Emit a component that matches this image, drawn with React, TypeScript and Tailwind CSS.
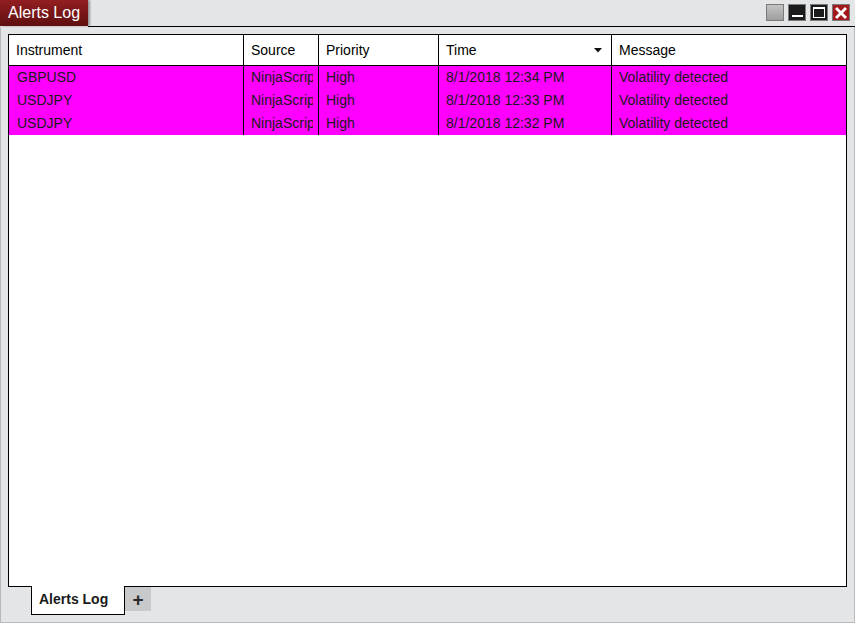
import type { ReactNode } from 'react';

const font = { fontFamily: '"Liberation Sans", Arial, sans-serif' };

const columns = ['Instrument', 'Source', 'Priority', 'Time', 'Message'];

const alerts = [
  { instrument: 'GBPUSD', source: 'NinjaScript', priority: 'High', time: '8/1/2018 12:34 PM', message: 'Volatility detected' },
  { instrument: 'USDJPY', source: 'NinjaScript', priority: 'High', time: '8/1/2018 12:33 PM', message: 'Volatility detected' },
  { instrument: 'USDJPY', source: 'NinjaScript', priority: 'High', time: '8/1/2018 12:32 PM', message: 'Volatility detected' },
];

function WinButton({ className, children }: { className: string; children?: ReactNode }) {
  return (
    <div className={`flex h-[17px] w-[18px] items-center justify-center border border-[#7a7a7a] ${className}`}>
      {children}
    </div>
  );
}

function TitleBar() {
  return (
    <div className="flex h-[27px] items-start">
      <div className="relative z-10 flex h-[26px] w-[88px] items-center bg-gradient-to-b from-[#931e21] to-[#5f0f10] pl-[8px] text-[16px] text-white shadow-[2px_0_2px_rgba(0,0,0,0.35)]">
        Alerts Log
      </div>
      <div className="flex h-[27px] flex-1 items-start justify-end gap-[4px] border-b border-black pr-[5px] pt-[4px]">
        <WinButton className="bg-gradient-to-b from-[#c4c4c4] to-[#9e9e9e]" />
        <WinButton className="items-end bg-[#1b1b1b] pb-[3px]">
          <div className="h-[2px] w-[11px] bg-white" />
        </WinButton>
        <WinButton className="bg-[#1b1b1b]">
          <div className="h-[11px] w-[12px] border border-t-[2px] border-white" />
        </WinButton>
        <WinButton className="bg-[#a3191b]">
          <svg width="12" height="12" viewBox="0 0 12 12">
            <path d="M2 2 L10 10 M10 2 L2 10" stroke="white" strokeWidth="2.8" strokeLinecap="square" />
          </svg>
        </WinButton>
      </div>
    </div>
  );
}

function AlertsGrid() {
  const grid = 'grid grid-cols-[235px_75px_120px_173px_1fr]';
  return (
    <div className="mx-[7px] mt-[7px] flex-1 border border-black bg-white">
      <div className={`${grid} h-[31px] border-b border-black text-[14px] text-black`}>
        {columns.map((c, i) => (
          <div
            key={c}
            className={`flex items-center justify-between px-[7px] ${i < columns.length - 1 ? 'border-r border-black' : ''}`}
          >
            <span>{c}</span>
            {c === 'Time' && (
              <svg width="8" height="5" viewBox="0 0 8 5" className="mr-[2px]">
                <path d="M0 0 H8 L4 4.5 Z" fill="#111" />
              </svg>
            )}
          </div>
        ))}
      </div>
      {alerts.map((a, r) => (
        <div key={r} className={`${grid} h-[23px] bg-[#ff00ff] text-[14px] text-[#1a1a1a]`}>
          {[a.instrument, a.source, a.priority, a.time, a.message].map((v, i) => (
            <div
              key={i}
              className={`flex items-center pb-px ${i === 0 ? 'pl-[8px]' : 'pl-[7px]'} ${
                i < 4 ? 'border-r border-black pr-[5px]' : ''
              }`}
            >
              <div className="overflow-hidden whitespace-nowrap">{v}</div>
            </div>
          ))}
        </div>
      ))}
    </div>
  );
}

function TabStrip() {
  return (
    <div className="flex h-[35px] items-start pl-[30px]">
      <div className="relative z-10 -mt-px flex h-[29px] w-[94px] items-center border-x border-b border-black bg-white pb-px pl-[7px] text-[14px] font-bold text-[#1a1a1a]">
        Alerts Log
      </div>
      <div className="flex h-[24px] w-[26px] items-center justify-center bg-[#c8c9cb] text-[19px] font-bold leading-none text-[#2a2a2a]">
        +
      </div>
    </div>
  );
}

export default function App() {
  return (
    <div className="flex h-[623px] w-[855px] flex-col bg-[#e4e5e7]" style={font}>
      <TitleBar />
      <div className="flex flex-1 flex-col border-x border-b border-[#b9b9b9]">
        <AlertsGrid />
        <TabStrip />
      </div>
    </div>
  );
}
